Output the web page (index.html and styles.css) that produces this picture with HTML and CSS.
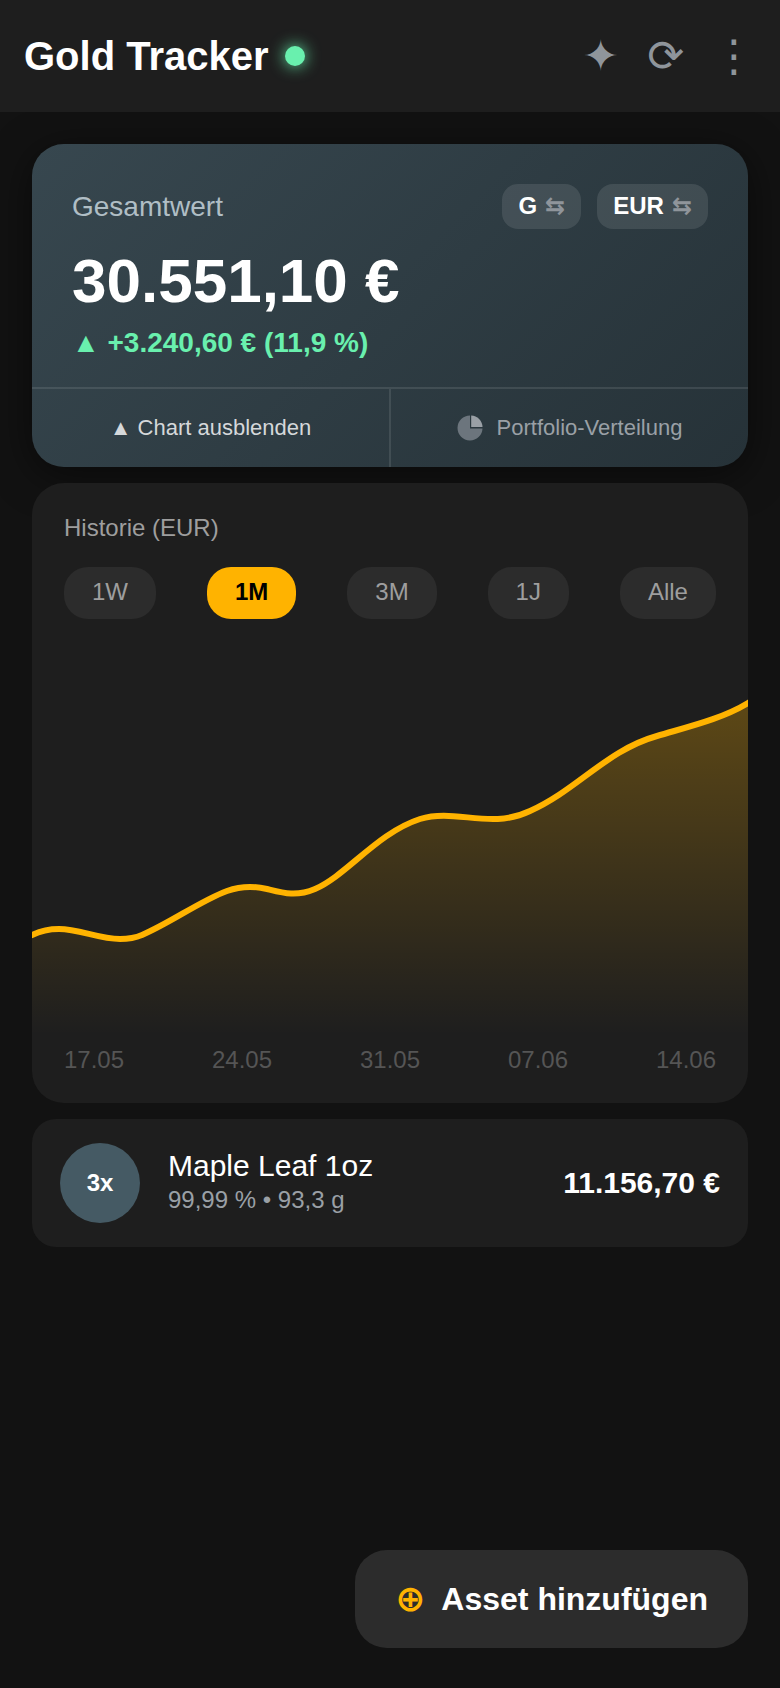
FILE: index.html
```html
<!DOCTYPE html>
<html lang="de">

<head>
    <meta charset="UTF-8">
    <meta name="viewport" content="width=device-width, initial-scale=1.0">
    <title>Gold Tracker</title>
    <link rel="stylesheet" href="styles.css">
</head>

<body>

    <header class="app-bar">
        <h1>Gold Tracker</h1>
        <span class="status-dot"></span>
        <div class="app-actions">
            <button type="button">✦</button>
            <button type="button">⟳</button>
            <button type="button">⋮</button>
        </div>
    </header>

    <main class="content">

        <section class="summary">
            <div class="summary-body">
                <div class="summary-head">
                    <span class="summary-label">Gesamtwert</span>
                    <div class="toggles">
                        <button type="button" class="toggle">G <span>⇆</span></button>
                        <button type="button" class="toggle">EUR <span>⇆</span></button>
                    </div>
                </div>
                <div class="total">30.551,10 €</div>
                <div class="change">▲ +3.240,60 € (11,9 %)</div>
            </div>
            <div class="summary-tabs">
                <button type="button" class="tab active">▲ Chart ausblenden</button>
                <button type="button" class="tab">
                    <svg class="pie" viewBox="0 0 26 26" width="26" height="26">
                        <path d="M13 0.5A12.5 12.5 0 1 0 25.5 13.4H13z" fill="#6c757d" />
                        <path d="M14.2 0.5A11.8 11.8 0 0 1 25.5 12H14.2z" fill="#9aa0a6" />
                    </svg>
                    Portfolio-Verteilung
                </button>
            </div>
        </section>

        <section class="history">
            <h2>Historie (EUR)</h2>
            <div class="ranges">
                <button type="button" class="range">1W</button>
                <button type="button" class="range active">1M</button>
                <button type="button" class="range">3M</button>
                <button type="button" class="range">1J</button>
                <button type="button" class="range">Alle</button>
            </div>
            <svg class="chart" viewBox="0 0 716 400" preserveAspectRatio="none">
                <defs>
                    <linearGradient id="goldFill" x1="0" y1="0" x2="0" y2="1">
                        <stop offset="0" stop-color="#ffb300" stop-opacity="0.28" />
                        <stop offset="1" stop-color="#ffb300" stop-opacity="0" />
                    </linearGradient>
                </defs>
                <path fill="url(#goldFill)" d="M0 300C8 296 17 294 27 294C47 294 67 304 88 304C97 304 103 303 110 300C140 287 168 266 195 256C209 251 222 251 235 254C251 258 264 262 283 254C315 240 345 198 388 184C424 173 458 195 498 176C545 155 575 115 625 101C655 92 690 84 716 68V400H0z" />
                <path class="chart-line" d="M-4 302L0 300C8 296 17 294 27 294C47 294 67 304 88 304C97 304 103 303 110 300C140 287 168 266 195 256C209 251 222 251 235 254C251 258 264 262 283 254C315 240 345 198 388 184C424 173 458 195 498 176C545 155 575 115 625 101C655 92 690 84 716 68L721 65" />
            </svg>
            <div class="dates">
                <span>17.05</span>
                <span>24.05</span>
                <span>31.05</span>
                <span>07.06</span>
                <span>14.06</span>
            </div>
        </section>

        <article class="asset">
            <div class="asset-count">3x</div>
            <div class="asset-info">
                <div class="asset-name">Maple Leaf 1oz</div>
                <div class="asset-meta">99,99 % • 93,3 g</div>
            </div>
            <div class="asset-value">11.156,70 €</div>
        </article>

        <button type="button" class="add-button"><span>⊕</span>Asset hinzufügen</button>

    </main>

</body>

</html>
```
FILE: styles.css
```css
* {
    box-sizing: border-box;
}

body {
    margin: 0;
    min-height: 100vh;
    display: flex;
    flex-direction: column;
    background-color: #121212;
    color: #fff;
    font-family: "Liberation Sans", Arial, "DejaVu Sans", sans-serif;
}

button {
    border: none;
    margin: 0;
    padding: 0;
    background: none;
    color: inherit;
    font-family: inherit;
    cursor: pointer;
}

/* Header */
.app-bar {
    position: relative;
    z-index: 1;
    display: flex;
    align-items: center;
    gap: 16px;
    height: 112px;
    padding: 0 24px;
    background-color: #1e1e1e;
}

.app-bar h1 {
    margin: 0;
    font-size: 40px;
    font-weight: bold;
}

.status-dot {
    width: 20px;
    height: 20px;
    border-radius: 50%;
    background-color: #69f0ae;
    box-shadow: 0 0 16px #69f0ae;
}

.app-actions {
    display: flex;
    gap: 28px;
    margin-left: auto;
}

.app-actions button {
    font-size: 44px;
    line-height: 52px;
    color: #8f959b;
}

.content {
    flex: 1;
    display: flex;
    flex-direction: column;
    gap: 16px;
    padding: 32px 32px 40px;
}

/* Total value */
.summary {
    border-radius: 32px;
    background: linear-gradient(135deg, #37474f, #263238);
    box-shadow: 0 8px 40px rgba(0, 0, 0, 0.5);
}

.summary-body {
    padding: 40px 40px 28px;
}

.summary-head {
    display: flex;
    justify-content: space-between;
    align-items: center;
}

.summary-label {
    font-size: 28px;
    color: #b0bec5;
}

.toggles {
    display: flex;
    gap: 16px;
}

.toggle {
    display: flex;
    gap: 8px;
    padding: 8px 16px 10px;
    border-radius: 16px;
    background-color: rgba(255, 255, 255, 0.1);
    font-size: 24px;
    font-weight: bold;
    line-height: 27px;
}

.toggle span {
    color: #8f959b;
}

.total {
    margin: 16px 0 10px;
    font-size: 62px;
    font-weight: bold;
    line-height: 72px;
}

.change {
    font-size: 28px;
    font-weight: bold;
    line-height: 32px;
    color: #69f0ae;
}

.summary-tabs {
    display: flex;
    border-top: 2px solid rgba(255, 255, 255, 0.1);
}

.tab {
    flex: 1;
    display: flex;
    justify-content: center;
    align-items: center;
    gap: 14px;
    height: 78px;
    font-size: 22px;
    color: #9aa0a6;
}

.tab.active {
    color: #d5d8da;
    border-right: 2px solid rgba(255, 255, 255, 0.1);
}

/* History */
.history {
    padding: 31px 0 29px;
    border-radius: 32px;
    background-color: #1e1e1e;
    position: relative;
}

.history h2 {
    margin: 0 32px 25px;
    font-size: 24px;
    font-weight: normal;
    line-height: 28px;
    color: #9e9e9e;
}

.ranges,
.dates {
    display: flex;
    justify-content: space-between;
    padding: 0 32px;
}

.range {
    padding: 12px 28px 14px;
    border-radius: 24px;
    background-color: #2c2c2c;
    font-size: 24px;
    line-height: 26px;
    color: #9e9e9e;
}

.range.active {
    background-color: #ffb300;
    color: #000;
    font-weight: bold;
}

.chart {
    display: block;
    width: 100%;
    height: 400px;
    margin: 16px 0 11px;
}

.chart-line {
    fill: none;
    stroke: #ffb300;
    stroke-width: 6;
}

.dates {
    font-size: 24px;
    line-height: 28px;
    color: #555;
}

/* Assets */
.asset {
    display: flex;
    align-items: center;
    gap: 28px;
    padding: 24px 28px;
    border-radius: 24px;
    background-color: #1e1e1e;
}

.asset-count {
    display: flex;
    justify-content: center;
    align-items: center;
    width: 80px;
    height: 80px;
    border-radius: 50%;
    background-color: #455a64;
    font-size: 24px;
    font-weight: bold;
}

.asset-name {
    font-size: 30px;
    line-height: 34px;
}

.asset-meta {
    font-size: 24px;
    line-height: 34px;
    color: #9aa0a6;
}

.asset-value {
    margin-left: auto;
    font-size: 30px;
    font-weight: bold;
}

.add-button {
    display: flex;
    align-items: center;
    gap: 16px;
    align-self: flex-end;
    margin-top: auto;
    padding: 28px 40px;
    border-radius: 32px;
    background-color: #2c2c2c;
    font-size: 32px;
    font-weight: bold;
}

.add-button span {
    font-size: 36px;
    line-height: 42px;
    color: #ffb300;
}
```
